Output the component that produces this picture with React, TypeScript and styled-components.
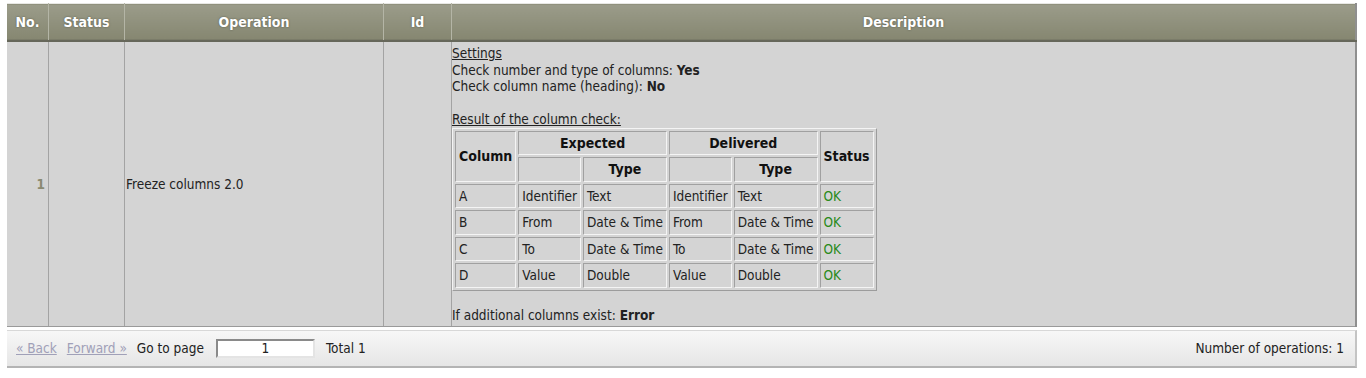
import styled, { createGlobalStyle } from "styled-components";

const GlobalStyle = createGlobalStyle`
  body {
    margin: 0;
    background: #fff;
    font-family: "DejaVu Sans Condensed", "Liberation Sans", sans-serif;
    font-size: 13.5px;
    color: #222;
  }
`;

const rows = [
  { col: "A", expId: "Identifier", expType: "Text", delId: "Identifier", delType: "Text", status: "OK" },
  { col: "B", expId: "From", expType: "Date & Time", delId: "From", delType: "Date & Time", status: "OK" },
  { col: "C", expId: "To", expType: "Date & Time", delId: "To", delType: "Date & Time", status: "OK" },
  { col: "D", expId: "Value", expType: "Double", delId: "Value", delType: "Double", status: "OK" },
];

export default function App() {
  return (
    <Page>
      <GlobalStyle />
      <Grid>
        <thead>
          <tr>
            <HeadCell $width={41}>No.</HeadCell>
            <HeadCell $width={75}>Status</HeadCell>
            <HeadCell $width={258}>Operation</HeadCell>
            <HeadCell $width={67}>Id</HeadCell>
            <HeadCell>Description</HeadCell>
          </tr>
        </thead>
        <tbody>
          <tr>
            <NumberCell>1</NumberCell>
            <BodyCell />
            <BodyCell>Freeze columns 2.0</BodyCell>
            <BodyCell />
            <DescriptionCell>
              <Line>
                <u>Settings</u>
              </Line>
              <Line>
                Check number and type of columns: <b>Yes</b>
              </Line>
              <Line>
                Check column name (heading): <b>No</b>
              </Line>
              <Line>&nbsp;</Line>
              <Line>
                <u>Result of the column check:</u>
              </Line>
              <CheckTable>
                <thead>
                  <tr>
                    <CheckHead rowSpan={2}>Column</CheckHead>
                    <CheckHead colSpan={2}>Expected</CheckHead>
                    <CheckHead colSpan={2}>Delivered</CheckHead>
                    <CheckHead rowSpan={2}>Status</CheckHead>
                  </tr>
                  <tr>
                    <CheckHead />
                    <CheckHead>Type</CheckHead>
                    <CheckHead />
                    <CheckHead>Type</CheckHead>
                  </tr>
                </thead>
                <tbody>
                  {rows.map((r) => (
                    <tr key={r.col}>
                      <CheckCell>{r.col}</CheckCell>
                      <CheckCell>{r.expId}</CheckCell>
                      <CheckCell>{r.expType}</CheckCell>
                      <CheckCell>{r.delId}</CheckCell>
                      <CheckCell>{r.delType}</CheckCell>
                      <CheckCell $ok>{r.status}</CheckCell>
                    </tr>
                  ))}
                </tbody>
              </CheckTable>
              <Line>&nbsp;</Line>
              <Line>
                If additional columns exist: <b>Error</b>
              </Line>
            </DescriptionCell>
          </tr>
        </tbody>
      </Grid>
      <Pager>
        <NavLink>« Back</NavLink>
        <NavLink>Forward »</NavLink>
        <span>Go to page</span>
        <PageInput defaultValue="1" />
        <Total>Total 1</Total>
        <Count>Number of operations: 1</Count>
      </Pager>
    </Page>
  );
}

const Page = styled.div`
  padding: 3px 9px 0 7px;
`;

const Grid = styled.table`
  width: 100%;
  border-collapse: collapse;
  border-top: 1px solid #e8e8e4;
  border-right: 2px solid #8f8f8f;
`;

const HeadCell = styled.th<{ $width?: number }>`
  width: ${(p) => (p.$width ? `${p.$width}px` : "auto")};
  height: 36px;
  padding: 0;
  background: linear-gradient(#9b9c8a, #858670);
  border-left: 1px solid #b4b5a6;
  border-bottom: 2px solid #66675a;
  box-shadow: inset 0 -1px 0 #7b7c69;
  color: #fff;
  font-size: 14px;
  font-weight: bold;
  text-shadow: 0 0 2px #55564a;
  &:first-child {
    border-left: none;
  }
`;

const BodyCell = styled.td`
  background: #d4d4d4;
  border-top: 1px solid #a6a6a6;
  border-left: 1px solid #a3a3a3;
  border-bottom: 1px solid #9a9a9a;
  padding: 0 1px;
  vertical-align: middle;
  &:first-child {
    border-left: none;
  }
`;

const NumberCell = styled(BodyCell)`
  text-align: right;
  color: #8a8a72;
  font-weight: bold;
  padding-right: 3px;
`;

const DescriptionCell = styled(BodyCell)`
  padding: 3px 1px 2px 0;
`;

const Line = styled.div`
  line-height: 16.5px;
`;

const CheckTable = styled.table`
  border: 1px solid;
  border-color: #f4f4f4 #9c9c9c #9c9c9c #f4f4f4;
  border-spacing: 2px;
  margin: 0;
`;

const CheckHead = styled.th`
  border: 1px solid;
  border-color: #a0a0a0 #f4f4f4 #f4f4f4 #a0a0a0;
  padding: 3px 3px;
  line-height: 16.5px;
  font-size: 14px;
  font-weight: bold;
  color: #111;
  text-align: center;
`;

const CheckCell = styled.td<{ $ok?: boolean }>`
  border: 1px solid;
  border-color: #a0a0a0 #f4f4f4 #f4f4f4 #a0a0a0;
  padding: 3px 3px;
  line-height: 16.5px;
  white-space: nowrap;
  color: ${(p) => (p.$ok ? "#2a8a1a" : "#222")};
`;

const Pager = styled.div`
  display: flex;
  align-items: center;
  margin-top: 3px;
  height: 35px;
  padding: 0 11px 0 9px;
  background: linear-gradient(#f7f7f7, #e6e6e6);
  border-top: 1px solid #d8d8d8;
  border-bottom: 2px solid #b4b4b4;
  border-right: 2px solid #c4c4c4;
  color: #222;
`;

const NavLink = styled.a`
  color: #a0a0b8;
  text-decoration: underline;
  margin-right: 10px;
  cursor: default;
`;

const PageInput = styled.input`
  width: 91px;
  height: 15px;
  margin-left: 12px;
  padding: 0 2px;
  border: 2px solid;
  border-color: #8a8a8a #e4e4e4 #e4e4e4 #8a8a8a;
  font: inherit;
  text-align: center;
  color: #222;
  background: #fff;
`;

const Total = styled.span`
  margin-left: 11px;
`;

const Count = styled.span`
  margin-left: auto;
`;
